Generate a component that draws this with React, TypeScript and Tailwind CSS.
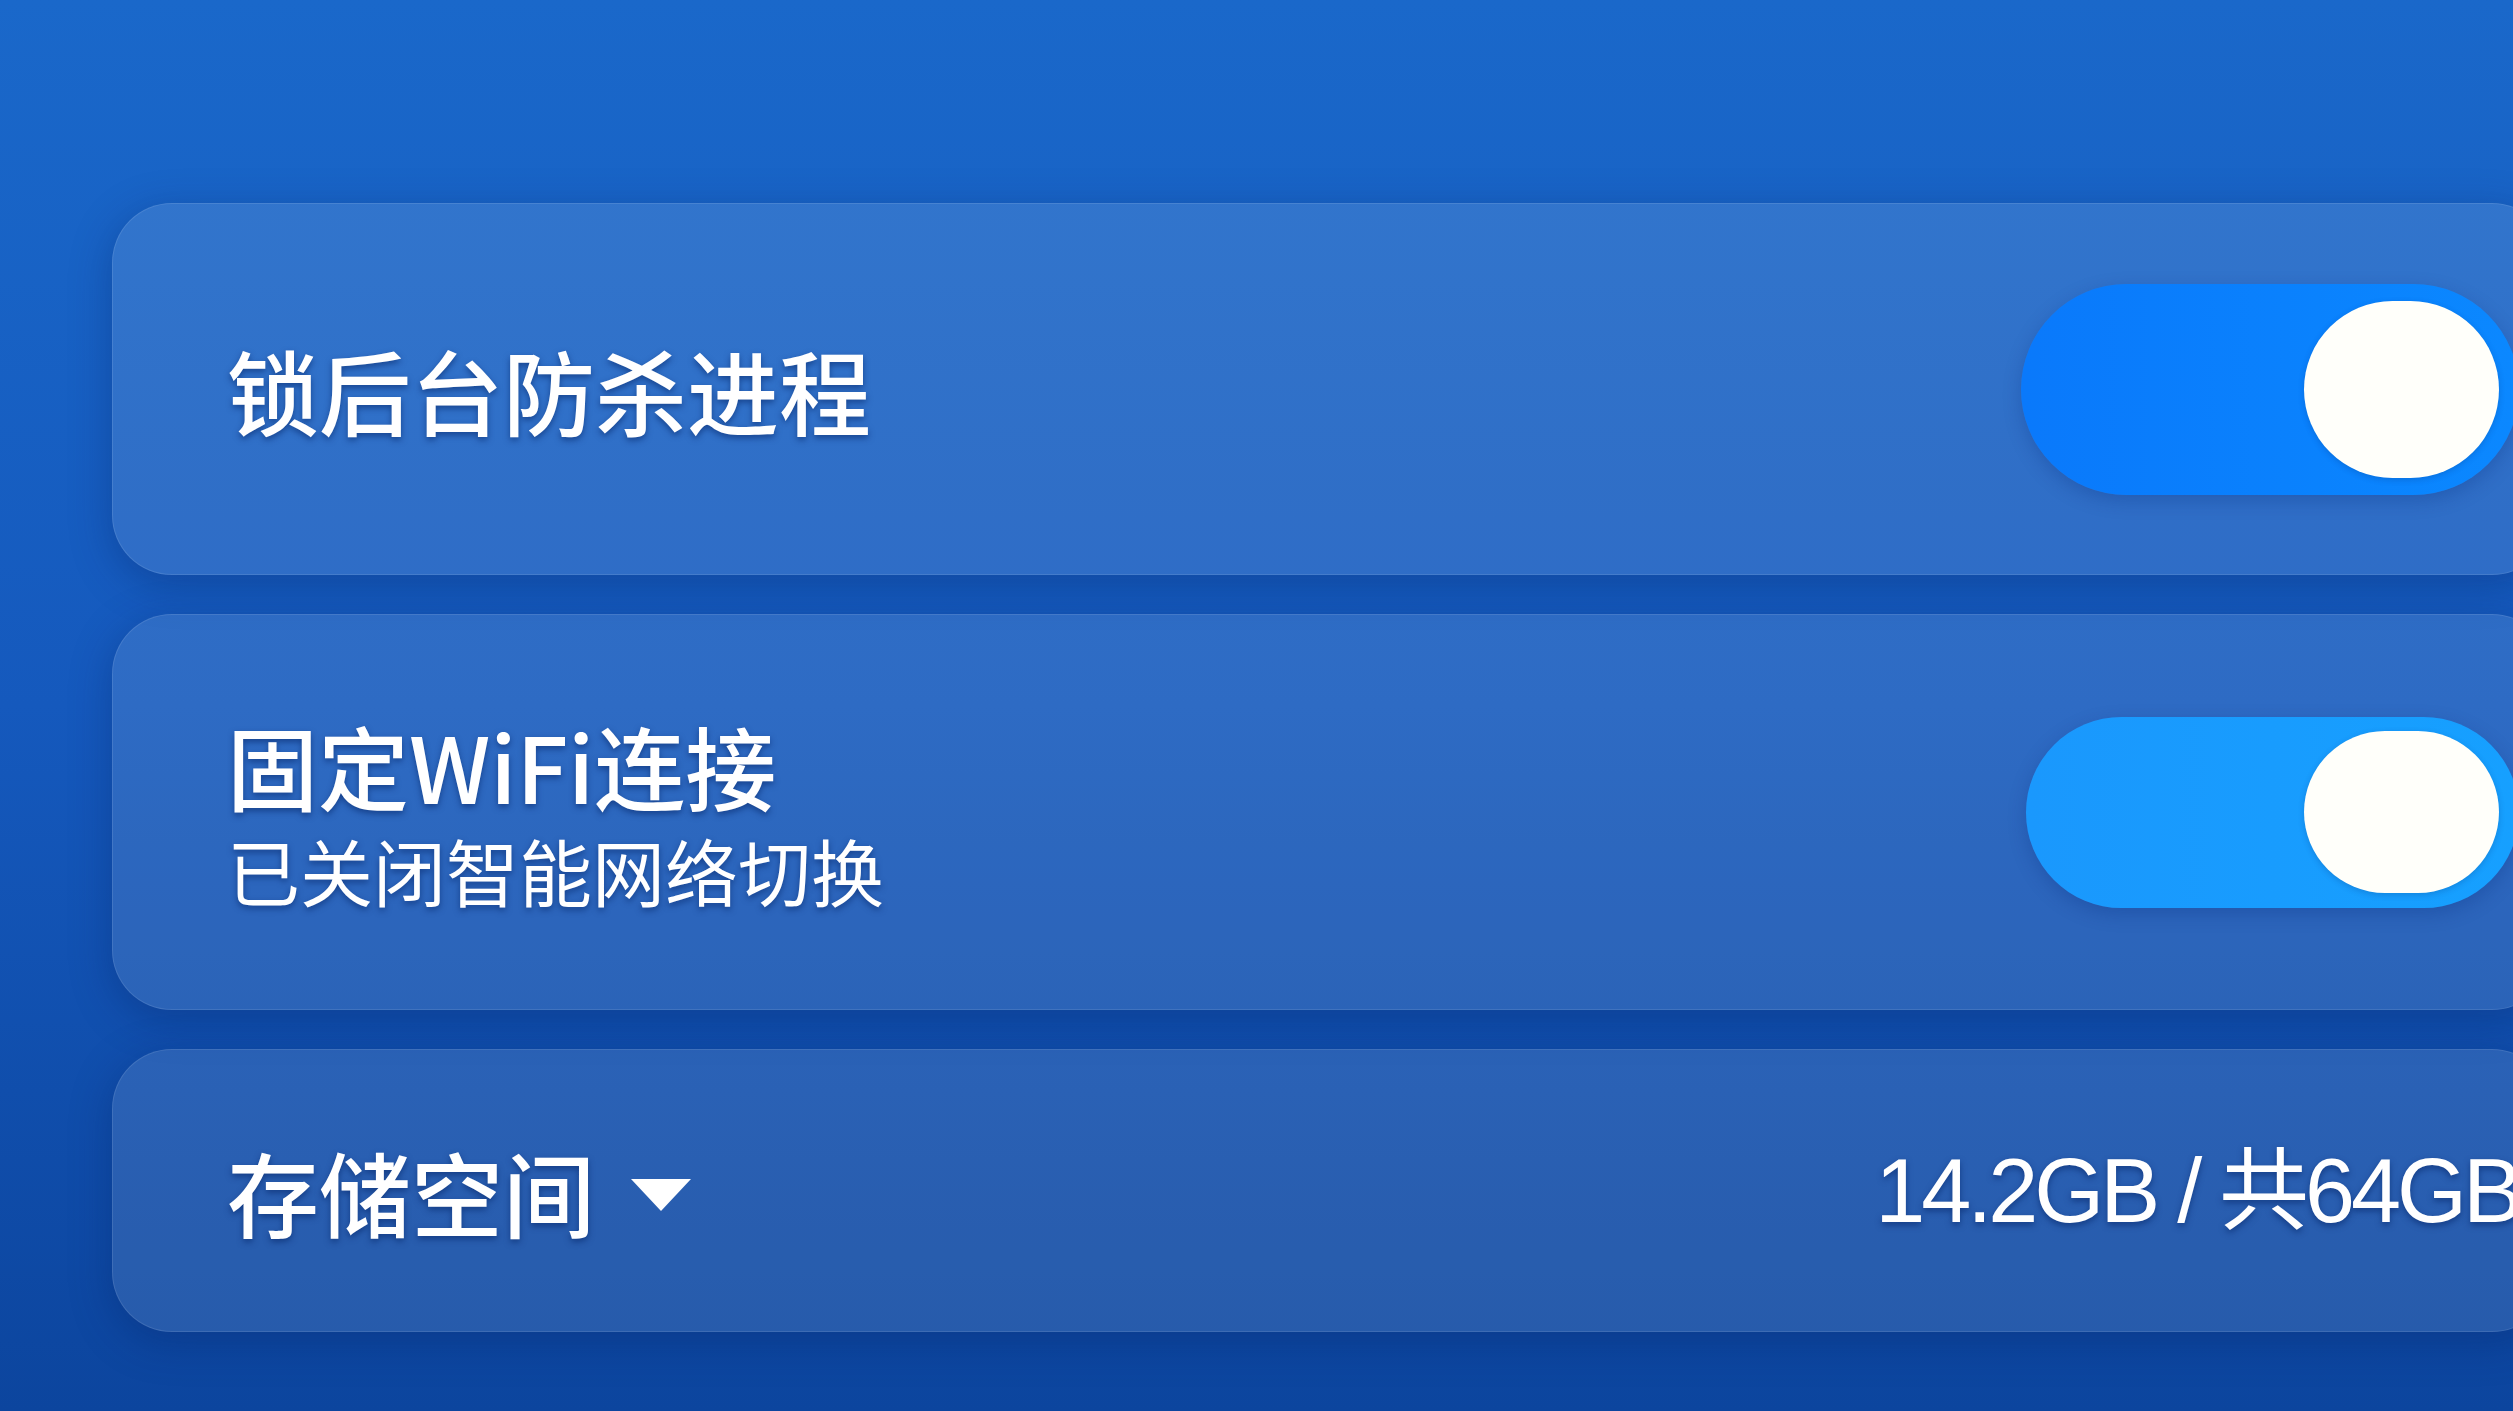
import React from "react";

// ---------- pieces ----------

const cjk = "font-['Noto_Sans_CJK_SC','Noto_Sans',sans-serif]";
const shadowText = "[text-shadow:0_3px_6px_rgba(4,32,96,0.55)]";

function Toggle({ tone, tall }: { tone: "deep" | "light"; tall?: boolean }) {
  const track =
    tone === "deep"
      ? "bg-linear-to-r from-[#0a79fb] to-[#0b88ff]"
      : "bg-linear-to-r from-[#1a98fd] to-[#16a0ff]";
  return (
    <div
      className={`flex items-center justify-end rounded-full pr-[20px] shadow-[0_6px_18px_rgba(0,40,120,0.25)] ${track} ${
        tall ? "h-[211px] w-[498px]" : "h-[191px] w-[493px]"
      }`}
    >
      <div
        className={`rounded-full bg-[#fffffa] shadow-[0_2px_6px_rgba(0,30,90,0.2)] ${
          tall ? "h-[177px] w-[195px]" : "h-[162px] w-[195px]"
        }`}
      />
    </div>
  );
}

function Card({ height, children }: { height: string; children: React.ReactNode }) {
  return (
    <div
      className={`flex w-[2440px] items-center justify-between rounded-[60px] border border-white/10 bg-white/[0.11] pl-[114px] pr-[32px] shadow-[0_10px_40px_rgba(5,35,100,0.35)] ${height}`}
    >
      {children}
    </div>
  );
}

// ---------- page ----------

export default function App() {
  return (
    <div className="relative h-[1411px] w-[2513px] overflow-hidden bg-linear-to-b from-[#1a68ca] via-[#1559bd] to-[#0c459e]">
      <div className="flex flex-col gap-[39px] pl-[112px] pt-[203px]">
        <Card height="h-[372px]">
          <span className={`${cjk} ${shadowText} text-[92px] font-medium leading-none text-white`}>
            锁后台防杀进程
          </span>
          <Toggle tone="deep" tall />
        </Card>

        <Card height="h-[396px]">
          <div className="flex flex-col gap-[12px]">
            <span className={`${cjk} ${shadowText} text-[91px] font-medium leading-[1.15] text-white`}>
              固定WiFi连接
            </span>
            <span className={`${cjk} ${shadowText} text-[73px] font-normal leading-[1.15] text-white`}>
              已关闭智能网络切换
            </span>
          </div>
          <Toggle tone="light" />
        </Card>

        <Card height="h-[283px]">
          <div className="flex items-center gap-[34px]">
            <span className={`${cjk} ${shadowText} text-[92px] font-medium leading-none text-white`}>
              存储空间
            </span>
            <svg width="64" height="36" viewBox="0 0 64 36" className="mt-[8px]">
              <path d="M2 2 H62 L32 34 Z" fill="#ffffff" />
            </svg>
          </div>
          <span
            className={`font-['Liberation_Sans','Noto_Sans_CJK_SC',sans-serif] ${shadowText} text-[90px] font-normal leading-none tracking-[-0.045em] text-white`}
          >
            14.2GB / 共64GB
          </span>
        </Card>
      </div>
    </div>
  );
}
